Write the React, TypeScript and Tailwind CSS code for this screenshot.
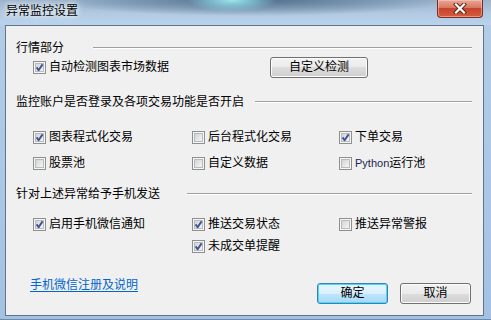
import React from "react";

function Check({ checked }: { checked: boolean }) {
  return (
    <svg width="13" height="13" viewBox="0 0 13 13" className="shrink-0 block">
      <defs>
        <linearGradient id="cbg" x1="0" y1="0" x2="1" y2="1">
          <stop offset="0" stopColor="#cfd1d4" />
          <stop offset="1" stopColor="#f8f8f8" />
        </linearGradient>
      </defs>
      <rect x="0.5" y="0.5" width="12" height="12" fill="#f6f6f6" stroke="#8e8f8f" />
      <rect x="2.5" y="2.5" width="8" height="8" fill="url(#cbg)" stroke="#b8babd" />
      {checked && (
        <path d="M3.6 6.4 L5.6 9.2 L9.6 3.4" fill="none" stroke="#3f5490" strokeWidth="1.9" strokeLinejoin="round" />
      )}
    </svg>
  );
}

function Item({ label, checked }: { label: React.ReactNode; checked: boolean }) {
  return (
    <div className="flex items-center gap-[3px] h-[20px] whitespace-nowrap">
      <Check checked={checked} />
      <span className="leading-[20px]">{label}</span>
    </div>
  );
}

function Header({ text, gap }: { text: string; gap: string }) {
  return (
    <div className="flex items-center h-[16px] whitespace-nowrap">
      <span className="leading-[16px]">{text}</span>
      <div className={`flex-1 ${gap} h-[2px] border-t border-t-[#a0a0a0] border-b border-b-white`} />
    </div>
  );
}

export default function App() {
  return (
    <div className="w-[491px] h-[320px] overflow-hidden flex flex-col text-[12px] text-black font-['Liberation_Sans','Noto_Sans_CJK_SC',sans-serif] bg-[linear-gradient(180deg,#b4cde6_0%,#aac7e6_60%,#a3c1e2_100%)]">
      {/* title bar */}
      <div className="h-[25px] shrink-0 flex items-start justify-between bg-[radial-gradient(ellipse_45px_12px_at_232px_0px,#9fe6ee_0%,rgba(140,220,230,0.6)_50%,transparent_100%),radial-gradient(ellipse_200px_16px_at_250px_0px,#4f6d88_0%,rgba(90,120,150,0.5)_60%,transparent_100%),linear-gradient(180deg,#9bb4cc_0%,#b2cae2_55%,#bad3ec_100%)]">
        <div className="pl-[6px] pt-[3px] leading-[16px] text-[12px] [text-shadow:0_0_5px_#ffffff,0_0_8px_#ffffff]">
          异常监控设置
        </div>
        <div className="mr-[8px] w-[46px] h-[18px] rounded-b-[4px] border border-t-0 border-[#7a2d22] bg-[linear-gradient(180deg,#e9a898_0%,#d8785f_45%,#c5442b_50%,#d55b3e_100%)] shadow-[inset_0_0_0_1px_rgba(255,210,200,0.5)] flex items-center justify-center">
          <svg width="14" height="11" viewBox="0 0 14 11">
            <path d="M3 1.5 L11 9.5 M11 1.5 L3 9.5" stroke="#5a2018" strokeWidth="4" strokeLinecap="square" />
            <path d="M3 1.5 L11 9.5 M11 1.5 L3 9.5" stroke="#ffffff" strokeWidth="2.2" strokeLinecap="square" />
          </svg>
        </div>
      </div>

      {/* client area */}
      <div className="ml-[5px] w-[479px] h-[291px] shrink-0 border border-[#627487] bg-[#f0f0f0] pl-[10px] pr-[11px] pt-[14px] flex flex-col">
        <Header text="行情部分" gap="ml-[29px]" />
        <div className="mt-[1px] flex items-center h-[20px] pl-[17px]">
          <div className="w-[237px]">
            <Item label="自动检测图表市场数据" checked />
          </div>
          <button className="w-[98px] h-[21px] rounded-[3px] border border-[#707070] bg-[linear-gradient(180deg,#f2f2f2_0%,#ebebeb_50%,#dddddd_50%,#cfcfcf_100%)] shadow-[inset_0_0_0_1px_#fcfcfc] text-[12px] leading-[19px] text-black">
            自定义检测
          </button>
        </div>

        <div className="mt-[17px]">
          <Header text="监控账户是否登录及各项交易功能是否开启" gap="ml-[11px]" />
        </div>
        <div className="mt-[17px] pl-[17px] grid grid-cols-[159px_147px_1fr] gap-y-[6px]">
          <Item label="图表程式化交易" checked />
          <Item label="后台程式化交易" checked={false} />
          <Item label="下单交易" checked />
          <Item label="股票池" checked={false} />
          <Item label="自定义数据" checked={false} />
          <Item
            label={
              <>
                <span className="text-[11px] text-[#1b2550]">Python</span>运行池
              </>
            }
            checked={false}
          />
        </div>

        <div className="mt-[13px]">
          <Header text="针对上述异常给予手机发送" gap="ml-[27px]" />
        </div>
        <div className="mt-[12px] pl-[17px] grid grid-cols-[159px_147px_1fr] gap-y-[2px]">
          <Item label="启用手机微信通知" checked />
          <Item label="推送交易状态" checked />
          <Item label="推送异常警报" checked={false} />
          <div />
          <Item label="未成交单提醒" checked />
        </div>

        <div className="mt-[21px] flex items-start">
          <a className="ml-[14px] leading-[16px] text-[#0066cc] underline underline-offset-[2px] cursor-pointer">
            手机微信注册及说明
          </a>
          <div className="ml-auto mr-[1px] mt-[6px] flex gap-[12px]">
            <button className="w-[71px] h-[21px] rounded-[3px] border border-[#3c7fb1] bg-[linear-gradient(180deg,#eaf6fd_0%,#d9f0fc_50%,#bee6fd_50%,#a7d9f5_100%)] shadow-[inset_0_0_0_1px_#48d8fb] text-[12px] leading-[19px] text-black">
              确定
            </button>
            <button className="w-[71px] h-[21px] rounded-[3px] border border-[#707070] bg-[linear-gradient(180deg,#f2f2f2_0%,#ebebeb_50%,#dddddd_50%,#cfcfcf_100%)] shadow-[inset_0_0_0_1px_#fcfcfc] text-[12px] leading-[19px] text-black">
              取消
            </button>
          </div>
        </div>
      </div>
      <div className="flex-1 border-b border-b-[#6f8aa6]" />
    </div>
  );
}
